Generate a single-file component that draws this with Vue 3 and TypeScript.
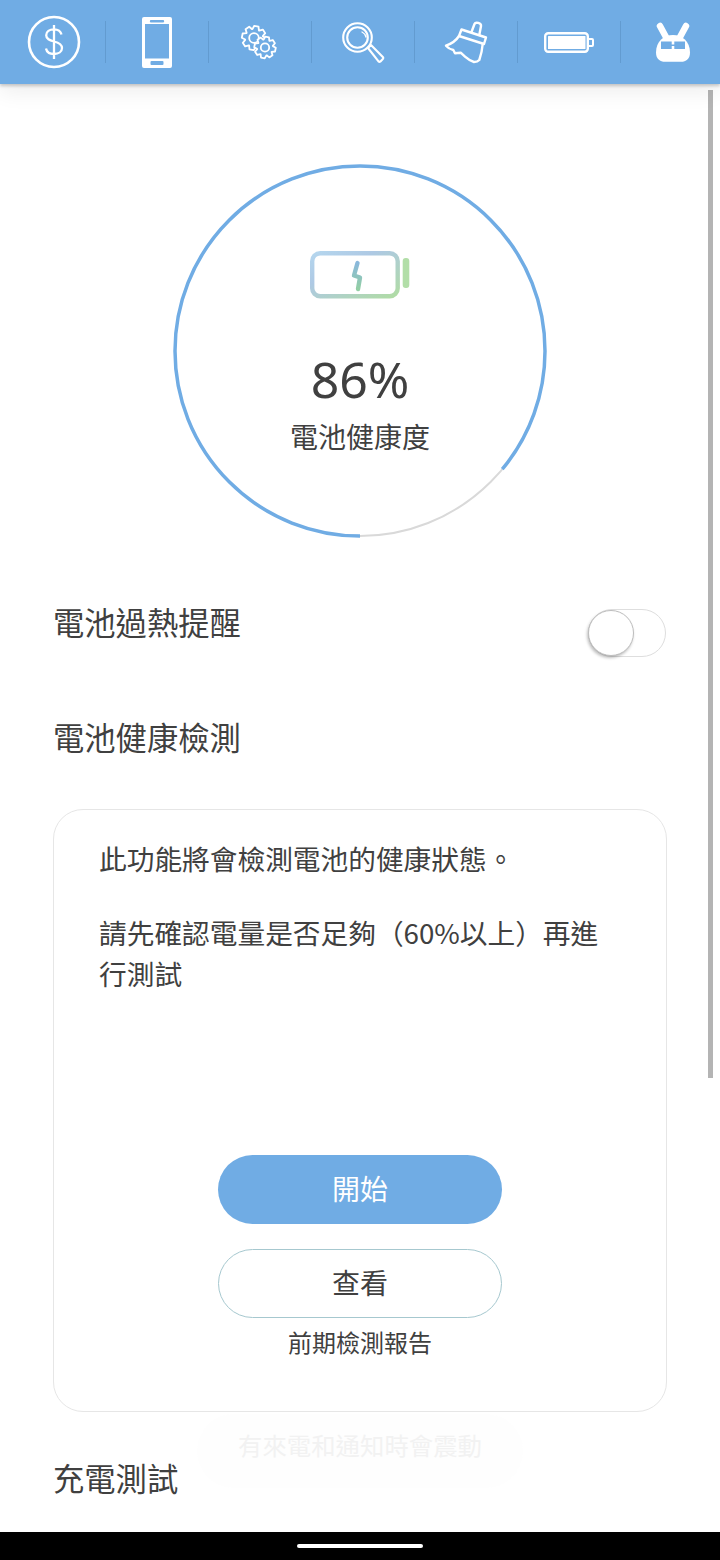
<script setup lang="ts">
/** 電池健康頁：頂部分頁列、健康度圓環、檢測卡片 */
const percent = 86;
const radius = 185;
const circumference = 2 * Math.PI * radius;
const arcLength = (circumference * percent) / 100;

// 齒輪外框路徑
function gearPath(cx: number, cy: number, outer: number, inner: number, teeth: number): string {
  const step = (Math.PI * 2) / teeth;
  const pts: string[] = [];
  for (let i = 0; i < teeth; i++) {
    const a = i * step + 0.2;
    const offs: [number, number][] = [
      [-0.5, inner],
      [-0.24, outer],
      [0.24, outer],
      [0.5, inner],
    ];
    for (const [o, r] of offs) {
      const t = a + o * step * 0.95;
      pts.push(`${(cx + Math.cos(t) * r).toFixed(2)} ${(cy + Math.sin(t) * r).toFixed(2)}`);
    }
  }
  return "M" + pts.join("L") + "Z";
}

const bigGear = gearPath(14, 15, 12.2, 9, 8);
const smallGear = gearPath(25, 24.500, 10.800, 8, 8);
</script>

<template>
  <div class="page">
    <header class="tabs">
      <div class="tab">
        <svg width="54" height="54" viewBox="0 0 54 54" fill="none" stroke="#fff">
          <circle cx="27" cy="27" r="25" stroke-width="2.600" />
          <path d="M34.500 19.500c-.8-3.200-3.600-5.200-7.500-5.200-4.500 0-7.800 2.400-7.800 6 0 3.800 3.300 5 7.800 6.200 4.500 1.200 8 2.700 8 6.500 0 3.700-3.500 6-8 6-4.100 0-7.300-2-8-5.500M27 10v34" stroke-width="2.300" />
        </svg>
      </div>
      <div class="tab">
        <svg width="30" height="51" viewBox="0 0 30 51">
          <path fill="#fff" fill-rule="evenodd" d="M2 0h26a2 2 0 0 1 2 2v47a2 2 0 0 1-2 2H2a2 2 0 0 1-2-2V2a2 2 0 0 1 2-2ZM3 7v34.500h24V7ZM9 3a1 1 0 0 0 0 2.400h12a1 1 0 0 0 0-2.400ZM9.500 44a1 1 0 0 0-1 1v2a1 1 0 0 0 1 1h11a1 1 0 0 0 1-1v-2a1 1 0 0 0-1-1Z" />
        </svg>
      </div>
      <div class="tab">
        <svg width="40" height="38" viewBox="0 0 40 38" fill="none" stroke="#fff" stroke-width="1.800" stroke-linejoin="round">
          <path :d="bigGear" />
          <circle cx="14" cy="15" r="4.800" />
          <path :d="smallGear" fill="#70ace4" />
          <circle cx="25" cy="24.500" r="4.200" />
        </svg>
      </div>
      <div class="tab">
        <svg width="44" height="46" viewBox="0 0 44 46" fill="none" stroke="#fff" stroke-width="2.100" stroke-linejoin="round">
          <circle cx="16.500" cy="18.500" r="14.300" />
          <circle cx="16.500" cy="18.500" r="10.300" />
          <path d="M21 13c2 1 3.500 3 4 5" stroke-width="1.300" stroke-linecap="round" />
          <path d="M27 29l3-3 11.800 12a1.500 1.500 0 0 1 0 2l-2.300 2.400a1.500 1.500 0 0 1-2 0Z" />
        </svg>
      </div>
      <div class="tab">
        <svg width="46" height="46" viewBox="0 0 46 46" fill="none" stroke="#fff" stroke-width="2.400" stroke-linejoin="round" stroke-linecap="round">
          <path d="M28.500 13L31.500 5c1-2.500 7-1 6.500 2L36.300 16" />
          <path d="M18.500 10.500L43 18.500 41 25 16 17Z" />
          <path d="M16 17C13.500 21 9 24.500 3 26.700 5 29 8 30.500 10.300 31L12 34.300 17.700 33.700 22 37.700C24 39.500 27.500 42 31 43 33 43 35 42.500 36.300 41 38 36 39.300 30 39.700 25" />
        </svg>
      </div>
      <div class="tab">
        <svg width="50" height="21" viewBox="0 0 50 21" fill="none" stroke="#fff">
          <rect x="1.200" y="1.200" width="42.600" height="18.600" rx="3" stroke-width="2.400" />
          <rect x="4" y="4" width="37.500" height="13" rx="0.500" fill="#fff" stroke="none" />
          <path stroke-width="2" d="M45 7h3a1 1 0 0 1 1 1v5a1 1 0 0 1-1 1h-3" />
        </svg>
      </div>
      <div class="tab">
        <svg width="36" height="41" viewBox="0 0 36 41">
          <path d="M5 4L11.500 16M31 4L24.500 16" stroke="#fff" stroke-width="6.500" stroke-linecap="round" />
          <path fill="#fff" d="M18 13C9 13 1 19 1 30.500 1 37 5 39.800 10 39.800H26C31 39.800 35 37 35 30.500 35 19 27 13 18 13Z" />
          <path fill="#70ace4" d="M6 19.500h10.700v7.500H6ZM19.300 19.500H30v7.500H19.300ZM16.700 22.500h2.600v1.500h-2.600Z" />
        </svg>
      </div>
    </header>

    <main class="content">
      <section class="gauge">
        <svg class="ring" width="376" height="376" viewBox="0 0 376 376" fill="none">
          <circle cx="188" cy="188" :r="radius" stroke="#d9d9d9" stroke-width="2" />
          <circle
            cx="188"
            cy="188"
            :r="radius"
            stroke="#70ace4"
            stroke-width="3.500"
            :stroke-dasharray="`${arcLength} ${circumference}`"
            transform="rotate(90 188 188)"
          />
        </svg>
        <div class="gauge-inner">
          <svg width="102" height="48" viewBox="0 0 102 48" fill="none">
            <defs>
              <linearGradient id="batt" x1="0" y1="0" x2="1" y2="1">
                <stop offset="0" stop-color="#b5d6ee" />
                <stop offset="0.35" stop-color="#aec9e4" />
                <stop offset="1" stop-color="#b0dca4" />
              </linearGradient>
              <linearGradient id="bolt" x1="0" y1="0" x2="0" y2="1">
                <stop offset="0" stop-color="#8ab8dc" />
                <stop offset="1" stop-color="#93cfa4" />
              </linearGradient>
            </defs>
            <rect x="3.200" y="2.200" width="85.500" height="43" rx="8" stroke="url(#batt)" stroke-width="4.400" />
            <rect x="93.700" y="7" width="6.600" height="30" rx="3" fill="#b2dea8" />
            <path d="M48.500 12L45 24.500l6 2L49 38" stroke="url(#bolt)" stroke-width="4.400" stroke-linecap="round" stroke-linejoin="round" />
          </svg>
          <div class="value">{{ percent }}%</div>
          <div class="label">電池健康度</div>
        </div>
      </section>

      <div class="row">
        <span>電池過熱提醒</span>
        <span class="switch"><span class="knob"></span></span>
      </div>
      <h2 class="section-title">電池健康檢測</h2>

      <section class="card">
        <p class="desc first">此功能將會檢測電池的健康狀態。</p>
        <p class="desc">請先確認電量是否足夠（60%以上）再進行測試</p>
        <div class="actions">
          <button type="button" class="btn btn-primary">開始</button>
          <button type="button" class="btn btn-outline">查看</button>
          <div class="hint">前期檢測報告</div>
        </div>
      </section>

      <h2 class="section-title last">充電測試</h2>
    </main>

    <div class="toast">有來電和通知時會震動</div>
    <div class="scrollbar"></div>

    <footer class="nav-bar"><span class="home-pill"></span></footer>
  </div>
</template>

<style>
html,
body {
  margin: 0;
  background: #fff;
}
</style>

<style scoped>
.page {
  position: relative;
  display: flex;
  flex-direction: column;
  width: 720px;
  height: 1560px;
  overflow: hidden;
  background: #fff;
  color: #404040;
  font-family: "Noto Sans CJK TC", "Noto Sans", sans-serif;
}

.tabs {
  position: relative;
  z-index: 2;
  flex: none;
  display: grid;
  grid-template-columns: repeat(7, 103px);
  align-items: center;
  height: 84px;
  padding-left: 3px;
  background: #70ace4;
  box-shadow: 0 2px 3px rgba(0, 0, 0, 0.2), 0 8px 20px rgba(0, 0, 0, 0.07);
}

.tab {
  display: flex;
  align-items: center;
  justify-content: center;
  height: 42px;
  border-right: 1px solid #629bd0;
}

.tab:last-child {
  border-right: none;
}

.content {
  flex: 1;
  min-height: 0;
  display: flex;
  flex-direction: column;
  padding: 0 53px;
}

.gauge {
  position: relative;
  align-self: center;
  width: 376px;
  height: 376px;
  margin-top: 79px;
}

.ring {
  display: block;
}

.gauge-inner {
  position: absolute;
  inset: 0;
  display: flex;
  flex-direction: column;
  align-items: center;
  padding-top: 88px;
}

.value {
  margin-top: 46px;
  font-family: "Noto Sans", sans-serif;
  font-size: 50px;
  line-height: 68px;
}

.label {
  margin-top: 3px;
  font-size: 28px;
  line-height: 40px;
}

.row {
  display: flex;
  align-items: flex-start;
  justify-content: space-between;
  margin-top: 60px;
  font-size: 31.300px;
  line-height: 46px;
}

.switch {
  position: relative;
  width: 78px;
  height: 48px;
  box-sizing: border-box;
  margin: 10px 1px 0 0;
  border: 1px solid #dedede;
  border-radius: 24px;
}

.knob {
  position: absolute;
  left: -1px;
  top: 0;
  width: 46px;
  height: 46px;
  box-sizing: border-box;
  border: 1px solid #bdbdbd;
  border-radius: 50%;
  background: #fff;
  box-shadow: -1px 2px 3px rgba(0, 0, 0, 0.25);
}

.section-title {
  margin: 57px 0 0;
  font-size: 31.300px;
  font-weight: 400;
  line-height: 46px;
}

.section-title.last {
  margin-top: 43px;
}

.card {
  display: flex;
  flex-direction: column;
  height: 603px;
  box-sizing: border-box;
  margin-top: 49px;
  padding: 28px 45px 0;
  border: 1px solid #e6e6e6;
  border-radius: 30px;
}

.desc {
  margin: 0;
  font-size: 27.700px;
  line-height: 41px;
}

.desc.first {
  margin-bottom: 33px;
}

.actions {
  display: flex;
  flex-direction: column;
  align-items: center;
  margin-top: 161px;
}

.btn {
  width: 284px;
  height: 69px;
  box-sizing: border-box;
  border-radius: 35px;
  font-family: inherit;
  font-size: 28px;
  padding: 0 0 4px;
}

.btn-primary {
  border: none;
  background: #70ace4;
  color: #fff;
}

.btn-outline {
  margin-top: 25px;
  border: 1px solid #a6c8cf;
  background: #fff;
  color: #404040;
}

.hint {
  margin-top: 6px;
  font-size: 24px;
  line-height: 36px;
}

.toast {
  position: absolute;
  left: 197px;
  top: 1414px;
  width: 326px;
  height: 74px;
  border-radius: 37px;
  background: rgba(253, 253, 253, 0.6);
  color: #f2f2f2;
  font-size: 24.400px;
  line-height: 62px;
  text-align: center;
}

.scrollbar {
  position: absolute;
  left: 708px;
  top: 90px;
  width: 5px;
  height: 988px;
  background: #b4b4b4;
}

.nav-bar {
  flex: none;
  display: flex;
  align-items: center;
  justify-content: center;
  height: 28px;
  background: #000;
}

.home-pill {
  width: 126px;
  height: 4px;
  margin-top: -1px;
  border-radius: 2px;
  background: #fff;
}
</style>
